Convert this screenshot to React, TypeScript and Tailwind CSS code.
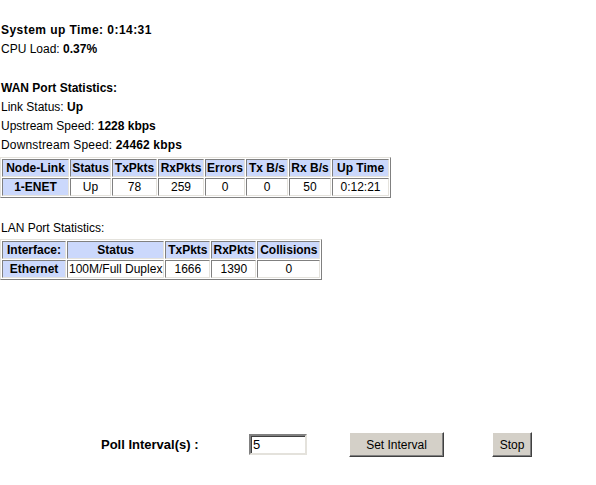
import React from "react";

const base =
  "border border-solid border-t-[#808080] border-l-[#808080] border-r-[#e4e2dc] border-b-[#e4e2dc] px-[1px] py-0 h-[18px] leading-[14px] text-center whitespace-nowrap";
const th = base + " bg-[#cbd8fc] font-bold";
const td = base + " bg-white font-normal";
const tdHead = base + " bg-[#cbd8fc] font-bold";
const table =
  "border-separate border-spacing-[1px] border border-solid border-t-[#e4e2dc] border-l-[#e4e2dc] border-r-[#808080] border-b-[#808080] text-[12px]";

export default function App() {
  return (
    <div className="w-[596px] h-[485px] bg-white text-black font-['Liberation_Sans',Arial,sans-serif] text-[12px] relative">
      <div className="pt-[21px] pl-[1px]">
        <div className="h-[19px] leading-[19px] font-bold text-[12px] tracking-[0.45px]">
          System up Time: 0:14:31
        </div>
        <div className="h-[19px] leading-[19px]">
          CPU Load: <b>0.37%</b>
        </div>
        <div className="h-[20px]" />
        <div className="h-[19px] leading-[19px] font-bold">WAN Port Statistics:</div>
        <div className="h-[19px] leading-[19px]">
          Link Status: <b>Up</b>
        </div>
        <div className="h-[19px] leading-[19px]">
          Upstream Speed: <b>1228 kbps</b>
        </div>
        <div className="h-[19px] leading-[19px] tracking-[0.15px]">
          Downstream Speed: <b>24462 kbps</b>
        </div>
      </div>
      <div className="mt-[2px]">
        <table className={table}>
          <tbody>
            <tr>
              <th className={th + " w-[67px]"}>Node-Link</th>
              <th className={th + " w-[41px]"}>Status</th>
              <th className={th + " w-[45px]"}>TxPkts</th>
              <th className={th + " w-[46px]"}>RxPkts</th>
              <th className={th + " w-[40px]"}>Errors</th>
              <th className={th + " w-[42px]"}>Tx B/s</th>
              <th className={th + " w-[42px]"}>Rx B/s</th>
              <th className={th + " w-[57px]"}>Up Time</th>
            </tr>
            <tr>
              <td className={tdHead}>1-ENET</td>
              <td className={td}>Up</td>
              <td className={td}>78</td>
              <td className={td}>259</td>
              <td className={td}>0</td>
              <td className={td}>0</td>
              <td className={td}>50</td>
              <td className={td}>0:12:21</td>
            </tr>
          </tbody>
        </table>
      </div>
      <div className="mt-[21px] pl-[1px] h-[19px] leading-[19px]">LAN Port Statistics:</div>
      <div className="mt-[1px]">
        <table className={table}>
          <tbody>
            <tr>
              <th className={th + " w-[64px]"}>Interface:</th>
              <th className={th + " w-[95px]"}>Status</th>
              <th className={th + " w-[45px]"}>TxPkts</th>
              <th className={th + " w-[45px]"}>RxPkts</th>
              <th className={th + " w-[63px]"}>Collisions</th>
            </tr>
            <tr>
              <td className={tdHead}>Ethernet</td>
              <td className={td + " px-0"}>100M/Full Duplex</td>
              <td className={td}>1666</td>
              <td className={td}>1390</td>
              <td className={td}>0</td>
            </tr>
          </tbody>
        </table>
      </div>
      <div className="mt-[152px] flex items-center h-[25px]">
        <div className="pl-[101px] w-[249px] font-bold text-[13px]">Poll Interval(s) :</div>
        <div className="w-[58px] h-[21px] border-2 border-solid border-t-[#808080] border-l-[#808080] border-r-[#e4e2dc] border-b-[#e4e2dc] shadow-[inset_1px_1px_0_#404040] bg-white text-[13px] leading-[17px] pl-[2px]">
          5
        </div>
        <button className="ml-[42px] w-[95px] h-[25px] bg-[#d4d0c8] text-[12px] border border-solid border-t-white border-l-white border-r-[#404040] border-b-[#404040] shadow-[inset_-1px_-1px_0_#808080]">
          Set Interval
        </button>
        <button className="ml-[48px] w-[40px] h-[25px] bg-[#d4d0c8] text-[12px] border border-solid border-t-white border-l-white border-r-[#404040] border-b-[#404040] shadow-[inset_-1px_-1px_0_#808080]">
          Stop
        </button>
      </div>
    </div>
  );
}
